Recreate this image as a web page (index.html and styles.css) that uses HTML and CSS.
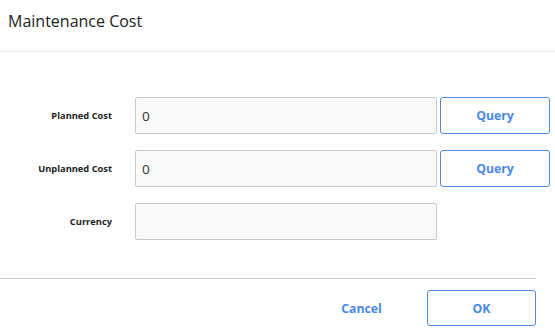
FILE: index.html
```html
<!DOCTYPE html>
<html>
<head>
    <title>Maintenance Cost</title>
    <link rel="stylesheet" href="styles.css">
</head>
<body>
    <div class="dialog-header">
        <h1>Maintenance Cost</h1>
    </div>

    <div class="dialog-body">
        <div class="form-row">
            <label>Planned Cost</label>
            <input type="text" value="0">
            <button class="query-btn">Query</button>
        </div>
        <div class="form-row">
            <label>Unplanned Cost</label>
            <input type="text" value="0">
            <button class="query-btn">Query</button>
        </div>
        <div class="form-row">
            <label>Currency</label>
            <input type="text" value="">
        </div>
    </div>

    <div class="dialog-footer">
        <button class="cancel-btn">Cancel</button>
        <button class="ok-btn">OK</button>
    </div>
</body>
</html>
```

FILE: styles.css
```css
body { margin: 0; font-family: "Open Sans", "Liberation Sans", sans-serif; color: #222; background: #fff; }
.dialog-header { height: 51px; border-bottom: 1px solid #ebebeb; padding: 0 8px; }
.dialog-header h1 { margin: 0; font-size: 16px; font-weight: normal; line-height: 42px; color: #222; }
.dialog-body { padding-top: 45px; display: flex; flex-direction: column; gap: 16px; }
.form-row { display: grid; grid-template-columns: 112px 325px 113px; align-items: center; }
.form-row label { font-size: 9.3px; font-weight: bold; text-align: right; color: #222; }
.form-row input { box-sizing: border-box; margin-left: 23px; width: 302px; height: 37px; border: 1px solid #c9c9c9; border-radius: 2px;
    background: #f9f9f9; padding: 0 6px; font-family: inherit; font-size: 13.5px; color: #333; }
.query-btn { margin-left: 3px; width: 110px; height: 37px; }
button { box-sizing: border-box; background: #fff; border: 1px solid #4a88e4; border-radius: 3px; color: #4a88e4;
    font-family: inherit; font-weight: bold; font-size: 12.3px; cursor: pointer; }
.dialog-footer { margin-top: 38px; width: 536px; border-top: 1px solid #cccccc; padding-top: 11px;
    display: flex; justify-content: flex-end; gap: 11px; }
.cancel-btn { border: none; width: 109px; height: 36px; }
.ok-btn { width: 109px; height: 36px; }
```
